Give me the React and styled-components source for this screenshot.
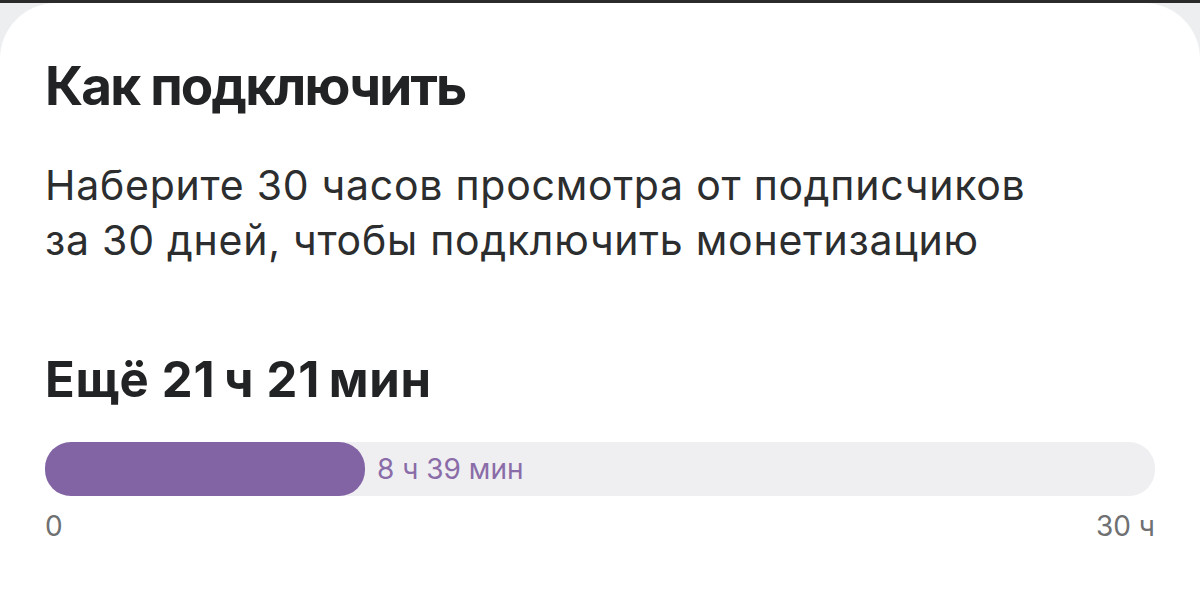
import React from "react";
import styled, { createGlobalStyle } from "styled-components";

const Global = createGlobalStyle`
  html, body { margin: 0; padding: 0; }
  body {
    background: #eceef0;
    font-family: Inter, "Noto Sans", "Liberation Sans", sans-serif;
    -webkit-font-smoothing: antialiased;
  }
`;

const Screen = styled.div`
  width: 1200px;
  height: 612px;
  overflow: hidden;
  display: flex;
  flex-direction: column;
  background: #eceef0;
  border-top: 3px solid #2b2b2b;
  box-sizing: border-box;
`;

const Card = styled.section`
  flex: 1;
  background: #ffffff;
  border-radius: 56px 56px 0 0;
  padding: 51px 45px 0 45px;
  display: flex;
  flex-direction: column;
`;

const Title = styled.h1`
  margin: 0;
  font-size: 53px;
  line-height: 64px;
  font-weight: 700;
  letter-spacing: -1.8px;
  color: #222324;
`;

const Text = styled.p`
  margin: 40px 0 0 0;
  font-size: 41px;
  line-height: 55px;
  font-weight: 400;
  letter-spacing: 0.75px;
  color: #2c2d2e;
`;

const Remaining = styled.h2`
  margin: 83px 0 0 0;
  font-size: 49px;
  line-height: 58px;
  font-weight: 700;
  letter-spacing: 0.8px;
  color: #222324;
`;

const Track = styled.div`
  margin-top: 33px;
  height: 54px;
  border-radius: 26px;
  background: #efeff2;
  display: flex;
  align-items: center;
`;

const Fill = styled.div`
  height: 100%;
  border-radius: 26px;
  background: #8263a4;
`;

const FillLabel = styled.span`
  margin-left: 12px;
  font-size: 28px;
  color: #8a6ca8;
`;

const Scale = styled.div`
  margin-top: 13px;
  display: flex;
  justify-content: space-between;
  font-size: 28px;
  line-height: 34px;
  color: #6f7072;
`;

export default function App() {
  const done = 8 * 60 + 39;
  const total = 30 * 60;
  const pct = (done / total) * 100;
  return (
    <>
      <Global />
      <Screen>
        <Card>
          <Title>Как подключить</Title>
          <Text>
            Наберите 30 часов просмотра от подписчиков
            <br />
            за 30 дней, чтобы подключить монетизацию
          </Text>
          <Remaining>Ещё 21{"\u2009"}ч 21{"\u2009"}мин</Remaining>
          <Track>
            <Fill style={{ width: `${pct}%` }} />
            <FillLabel>8 ч 39 мин</FillLabel>
          </Track>
          <Scale>
            <span>0</span>
            <span>30 ч</span>
          </Scale>
        </Card>
      </Screen>
    </>
  );
}
